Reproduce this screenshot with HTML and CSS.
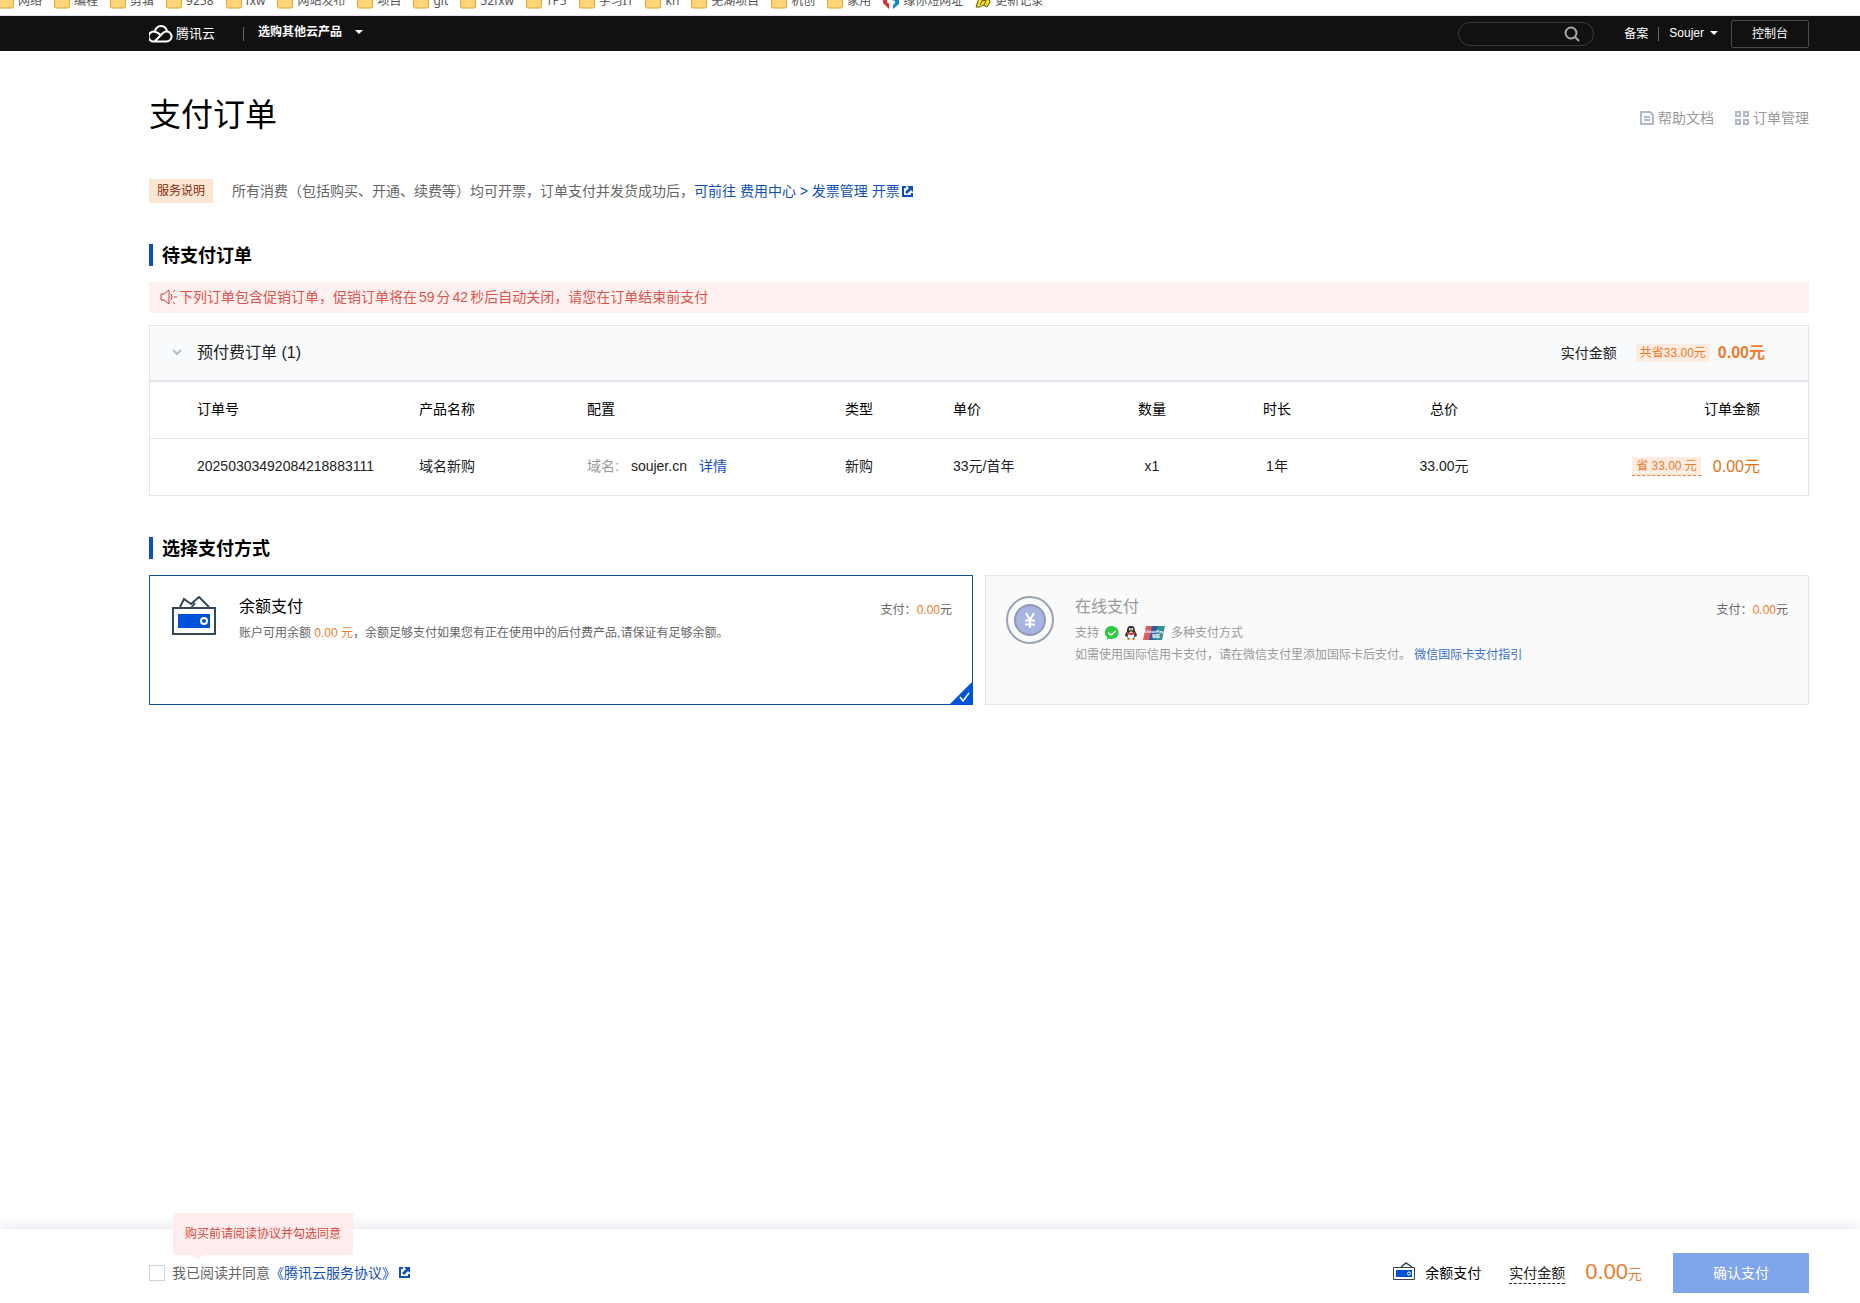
FILE: index.html
```html
<!DOCTYPE html>
<html lang="zh-CN">
<head>
<meta charset="utf-8">
<title>支付订单</title>
<link rel="stylesheet" href="styles.css">
</head>
<body>
<svg class="defs" width="0" height="0" aria-hidden="true">
  <symbol id="folder" viewBox="0 0 16 16"><path d="M.5 1.500h6l1 2h8v10a1.500 1.500 0 0 1-1.500 1.500h-12a1.500 1.500 0 0 1-1.500-1.500z" fill="#ffd57a" stroke="#e2a32e"/></symbol>
  <symbol id="external" viewBox="0 0 11 11"><path d="M0 0h4v2H2v7h7V7h2v4H0zM5 0h6v6L9 4 5 8 3 6l4-4z" fill="currentColor"/></symbol>
  <symbol id="wallet" viewBox="0 0 44 40"><path d="M8 11l4-8 7 5 8-7 10 10M19 12l4-5" fill="none" stroke="#33475b" stroke-width="2"/><path d="M1 12h42v26H1z" fill="#fff" stroke="#33475b" stroke-width="2"/><path d="M6 18h32v14H6z" fill="#0052d9"/><circle cx="32" cy="25" r="3" fill="none" stroke="#fff" stroke-width="2"/></symbol>
  <symbol id="wallet-small" viewBox="0 0 22 18"><path d="M8 5l5-4 6 4" fill="none" stroke="#33475b" stroke-width="1.500"/><path d="M.5 5.500h21v12H.5z" fill="#fff" stroke="#33475b"/><path d="M3 8h16v7H3z" fill="#0052d9"/><circle cx="16" cy="11.500" r="1.500" fill="none" stroke="#fff"/></symbol>
</svg>

<nav class="bookmarks" aria-label="书签">
  <a href="#"><svg><use href="#folder"/></svg>网络</a>
  <a href="#"><svg><use href="#folder"/></svg>编程</a>
  <a href="#"><svg><use href="#folder"/></svg>剪辑</a>
  <a href="#"><svg><use href="#folder"/></svg>9258</a>
  <a href="#"><svg><use href="#folder"/></svg>fxw</a>
  <a href="#"><svg><use href="#folder"/></svg>网站发布</a>
  <a href="#"><svg><use href="#folder"/></svg>项目</a>
  <a href="#"><svg><use href="#folder"/></svg>git</a>
  <a href="#"><svg><use href="#folder"/></svg>52fxw</a>
  <a href="#"><svg><use href="#folder"/></svg>TP5</a>
  <a href="#"><svg><use href="#folder"/></svg>学习IT</a>
  <a href="#"><svg><use href="#folder"/></svg>kh</a>
  <a href="#"><svg><use href="#folder"/></svg>芜湖项目</a>
  <a href="#"><svg><use href="#folder"/></svg>机创</a>
  <a href="#"><svg><use href="#folder"/></svg>家用</a>
  <a href="#"><svg viewBox="0 0 16 16"><path d="M0 5v5l6 6v-5l-2-2V5z" fill="#d8342c"/><path d="M9 7l3 1v2l-2 2v4l6-5V6z" fill="#1488c8"/></svg>缘你短网址</a>
  <a href="#"><svg viewBox="0 0 16 16"><path d="M1 14 4 5l4 3 6-2 1 3-3 5-4-2-3 2z" fill="#f5e21c" stroke="#5c5410"/><path d="M5 12l2-4M9 12l2-4" stroke="#5c5410"/></svg>更新记录</a>
</nav>

<header class="topbar">
  <a class="logo" href="#">
    <svg width="24" height="18" viewBox="0 0 24 18"><path d="M6 16.500h11.500a5 5 0 1 0-3.500-8.500L5.500 16.500a5 5 0 1 1 1-9.500c2 .2 3.500 1.500 5 3M6 7a6 6 0 0 1 12 0" fill="none" stroke="#fff" stroke-width="2"/></svg>
    <span>腾讯云</span>
  </a>
  <i class="divider"></i>
  <button class="menu" type="button">选购其他云产品<i class="caret"></i></button>
  <label class="search">
    <input type="search" aria-label="搜索">
    <svg width="16" height="16" viewBox="0 0 16 16"><circle cx="7" cy="7" r="5.500" fill="none" stroke="#a9a9a9" stroke-width="2"/><path d="M11 11l4 4" stroke="#a9a9a9" stroke-width="2"/></svg>
  </label>
  <a class="record" href="#">备案</a>
  <i class="divider"></i>
  <button class="user" type="button">Soujer<i class="caret"></i></button>
  <button class="console" type="button">控制台</button>
</header>

<main>
  <div class="page-head">
    <h1>支付订单</h1>
    <div class="page-links">
      <a href="#"><svg width="14" height="14" viewBox="0 0 14 14"><path d="M1 1h9l3 3v9H1zM4 6h6M4 9h6" fill="none" stroke="#b0bac8" stroke-width="2"/></svg>帮助文档</a>
      <a href="#"><svg width="14" height="14" viewBox="0 0 14 14"><path d="M1 1h4v4H1zM9 1h4v4H9zM1 9h4v4H1zM9 9h4v4H9z" fill="none" stroke="#b0bac8" stroke-width="2"/></svg>订单管理</a>
    </div>
  </div>

  <p class="notice"><span class="notice-tag">服务说明</span><span>所有消费（包括购买、开通、续费等）均可开票，订单支付并发货成功后，<a href="#">可前往 费用中心 &gt; 发票管理 开票<svg class="ext"><use href="#external"/></svg></a></span></p>

  <h2>待支付订单</h2>
  <p class="alert"><svg width="17" height="16" viewBox="0 0 17 16"><path d="M1 5h3l5-4v14l-5-4H1zM11 5q2 3 0 6M13 3l2-2M13 13l2 2M14 8h3" fill="none" stroke="#c9403c"/></svg><span>下列订单包含促销订单，促销订单将在<span class="count">59</span>分<span class="count">42</span>秒后自动关闭，请您在订单结束前支付</span></p>

  <section class="orders">
    <div class="orders-head">
      <button class="fold" type="button"><svg width="10" height="8" viewBox="0 0 10 8"><path d="M1 1l4 4 4-4" fill="none" stroke="#b3bccb" stroke-width="2"/></svg>预付费订单 (1)</button>
      <span class="orders-label">实付金额</span>
      <span class="save">共省33.00元</span>
      <strong>0.00元</strong>
    </div>
    <table>
      <colgroup><col class="c-id"><col class="c-name"><col class="c-conf"><col class="c-type"><col class="c-price"><col class="c-num"><col class="c-time"><col class="c-total"><col></colgroup>
      <thead>
        <tr><th>订单号</th><th>产品名称</th><th>配置</th><th>类型</th><th>单价</th><th class="mid">数量</th><th class="mid">时长</th><th class="mid">总价</th><th class="end">订单金额</th></tr>
      </thead>
      <tbody>
        <tr><td>20250303492084218883111</td><td>域名新购</td><td><span class="key">域名:</span>soujer.cn<a class="detail" href="#">详情</a></td><td>新购</td><td>33元/首年</td><td class="mid">x1</td><td class="mid">1年</td><td class="mid">33.00元</td><td class="end"><span class="amount"><span class="save dashed">省 33.00 元</span>0.00元</span></td></tr>
      </tbody>
    </table>
  </section>

  <h2>选择支付方式</h2>
  <div class="methods">
    <section class="method selected">
      <svg width="44" height="40"><use href="#wallet"/></svg>
      <div class="method-text">
        <h3>余额支付</h3>
        <p>账户可用余额 <b>0.00 元</b>，余额足够支付如果您有正在使用中的后付费产品,请保证有足够余额。</p>
      </div>
      <span class="pay">支付：<b>0.00</b>元</span>
      <svg class="corner" width="24" height="24" viewBox="0 0 24 24"><path d="M24 0v24H0z" fill="#0052d9"/><path d="M11 16l3 4 6-8" fill="none" stroke="#fff" stroke-width="1.500"/></svg>
    </section>
    <section class="method other">
      <svg width="48" height="48" viewBox="0 0 48 48"><circle cx="24" cy="24" r="23" fill="none" stroke="#99a3b5" stroke-width="2"/><circle cx="24" cy="24" r="15" fill="#a8b4e0" stroke="#8f99b3" stroke-width="2"/><path d="M20 17l4 7 4-7M24 24v8M19 24.500h10M19 28.500h10" fill="none" stroke="#fff" stroke-width="2"/></svg>
      <div class="method-text">
        <h3>在线支付</h3>
        <p class="brands">支持
          <svg width="14" height="14" viewBox="0 0 14 14"><path d="M7 0a7 6.500 0 1 1-3 12.500L2 14l.3-2.500A7 6.500 0 0 1 7 0z" fill="#2fcb3e"/><path d="M3 6.500l3 2.500 5-4" fill="none" stroke="#fff" stroke-width="1.500"/></svg>
          <svg width="12" height="14" viewBox="0 0 12 14"><path d="M6 0c3 0 4 2 4 5l2 4-1 2-1-1-1 3H3l-1-3-1 1-1-2 2-4c0-3 1-5 4-5z" fill="#2b2b33"/><ellipse cx="6" cy="9.500" rx="3.300" ry="3.500" fill="#fff"/><path d="M2 6q4 2 8 0v2q-4 2-8 0z" fill="#dd3c38"/><circle cx="4.800" cy="3" r="1" fill="#fff"/><circle cx="7.200" cy="3" r="1" fill="#fff"/><path d="M3.500 4.500h5L6 6zM2 13h3v1H2zM7 13h3v1H7z" fill="#f0a020"/></svg>
          <svg width="22" height="14" viewBox="0 0 22 14"><path d="M3 0h7L7 14H0z" fill="#dc5a60"/><path d="M9 0h7l-3 14H6z" fill="#33609c"/><path d="M15 0h7l-3 14h-7z" fill="#318f96"/><text x="2" y="7" class="union">UnionPay</text><text x="9" y="12" class="union">银联</text></svg>
          多种支付方式</p>
        <p>如需使用国际信用卡支付，请在微信支付里添加国际卡后支付。 <a href="#">微信国际卡支付指引</a></p>
      </div>
      <span class="pay">支付：<b>0.00</b>元</span>
    </section>
  </div>
</main>

<footer>
  <div class="agree">
    <div class="tip" role="tooltip">购买前请阅读协议并勾选同意</div>
    <input id="agree" type="checkbox">
    <label for="agree">我已阅读并同意</label><a href="#">《腾讯云服务协议》<svg class="ext"><use href="#external"/></svg></a>
  </div>
  <svg class="way-icon" width="22" height="18"><use href="#wallet-small"/></svg>
  <span class="way">余额支付</span>
  <span class="due">实付金额</span>
  <span class="sum">0.00<small>元</small></span>
  <button class="confirm" type="button">确认支付</button>
</footer>
</body>
</html>
```
FILE: styles.css
```css
* { box-sizing: border-box; }
body {
  margin: 0;
  min-height: 100vh;
  display: flex;
  flex-direction: column;
  background: #fff;
  color: #222;
  font: 14px/20px "Liberation Sans", "Noto Sans CJK SC", sans-serif;
}
h1, h2, h3, p { margin: 0; font-weight: 400; }
a { color: #0f4fbb; text-decoration: none; }
button { padding: 0; border: 0; background: none; color: inherit; font: inherit; white-space: nowrap; }
svg { flex: none; }
.defs { position: absolute; }
.ext { width: 11px; height: 11px; }

.bookmarks {
  display: flex;
  align-items: flex-start;
  gap: 12px;
  height: 16px;
  margin-left: -2px;
  overflow: hidden;
  border-bottom: 1px solid #e3e6ea;
}
.bookmarks a {
  display: flex;
  align-items: center;
  gap: 4px;
  margin-top: -8px;
  color: #555;
  font-family: "Noto Sans", "Noto Sans CJK SC", sans-serif;
  font-size: 12px;
  line-height: 18px;
  white-space: nowrap;
}
.bookmarks svg { width: 16px; height: 16px; }

.topbar {
  display: flex;
  align-items: center;
  height: 35px;
  padding: 0 51px 0 149px;
  background: #111;
  color: #fff;
  font-size: 12px;
}
.topbar a { color: #fff; }
.logo { display: flex; align-items: center; gap: 3px; margin-right: 28px; font-size: 13px; }
.divider { width: 1px; height: 14px; background: #666; }
.menu, .user { display: flex; align-items: center; font-weight: 700; }
.menu { gap: 13px; margin-left: 14px; padding-bottom: 3px; }
.user { gap: 6px; margin: 0 13px 0 10px; padding-bottom: 1px; font-weight: 400; }
.caret { border: 4px solid transparent; border-top-color: #fff; border-bottom: 0; }
.search {
  display: flex;
  align-items: center;
  width: 136px;
  height: 24px;
  margin: 0 30px 0 auto;
  padding: 0 13px;
  border: 1px solid #3a3a3a;
  border-radius: 12px;
}
.search input { flex: 1; min-width: 0; padding: 0; border: 0; outline: 0; background: none; color: #fff; }
.record { margin-right: 10px; }
.console { width: 78px; height: 28px; border: 1px solid #4a4a4a; border-radius: 2px; }

main { padding: 40px 51px 0 149px; }
.page-head { display: flex; align-items: center; justify-content: space-between; height: 48px; }
h1 { color: #000; font-size: 32px; line-height: 48px; }
.page-links { display: flex; gap: 21px; padding-top: 6px; }
.page-links a { display: flex; align-items: center; gap: 4px; color: #999; }
.notice { display: flex; align-items: center; gap: 19px; margin-top: 40px; color: #666; }
.notice-tag { padding: 2px 8px; background: #fde5d3; color: #8a2c0e; font-size: 12px; }
.notice .ext { margin-left: 2px; vertical-align: -1px; }

h2 {
  margin-top: 41px;
  padding: 2px 0 0 9px;
  border-left: 4px solid #0f4fbb;
  color: #000;
  font-size: 18px;
  font-weight: 700;
  line-height: 20px;
}
.alert {
  display: flex;
  align-items: center;
  gap: 2px;
  height: 31px;
  margin-top: 16px;
  padding: 0 0 2px 11px;
  background: #fdf1f0;
  color: #dc544f;
}
.count { margin: 0 2px; }

.orders { margin-top: 12px; border: 1px solid #e4e5e7; }
.orders-head {
  display: flex;
  align-items: center;
  height: 56px;
  padding: 0 43px 0 22px;
  border-bottom: 2px solid #e1e5ea;
  background: #f8fafc;
}
.fold { display: flex; align-items: center; gap: 15px; margin-right: auto; font-size: 16px; }
.save { padding: 0 4px; background: #fdecdf; color: #ed7b2f; font-size: 12px; line-height: 18px; }
.orders-head .save { margin: 0 8px 0 19px; }
.orders-head strong { color: #ed7b2f; font-size: 16px; }
table { width: 100%; border-collapse: collapse; table-layout: fixed; }
th, td { height: 57px; padding: 0 0 2px; font-weight: 400; text-align: left; white-space: nowrap; }
th { height: 56px; border-bottom: 1px solid #e4e5e7; color: #000; }
th:first-child, td:first-child { padding-left: 47px; }
th.mid, td.mid { text-align: center; }
th.end, td.end { padding-right: 48px; text-align: right; }
.c-id { width: 269px; }
.c-name { width: 168px; }
.c-conf { width: 258px; }
.c-type { width: 108px; }
.c-price { width: 135px; }
.c-num { width: 128px; }
.c-time { width: 122px; }
.c-total { width: 212px; }
.key { margin-right: 12px; color: #999; }
.detail { margin-left: 12px; }
.amount { display: inline-flex; align-items: center; gap: 12px; color: #e37318; font-size: 16px; }
.dashed { border-bottom: 1px dashed #ed7b2f; }

.methods { display: grid; grid-template-columns: 1fr 1fr; gap: 12px; margin-top: 16px; }
.method {
  position: relative;
  display: flex;
  align-items: flex-start;
  gap: 23px;
  min-height: 130px;
  padding: 20px 20px 20px 22px;
  border: 1px solid #e4e5e7;
  color: #666;
  font-size: 12px;
}
.selected { border-color: #12509e; }
.other { gap: 21px; padding-left: 20px; background: #fafafa; color: #999; }
.method-text { flex: 1; line-height: 22px; }
.method h3 { margin-bottom: 4px; color: #000; font-size: 16px; line-height: 22px; }
.method.other h3 { color: #999; }
.method b { color: #ed7b2f; font-weight: 400; }
.method a { color: #3970cc; }
.brands { display: flex; align-items: center; gap: 6px; }
.union { fill: #fff; font-size: 4px; font-weight: 700; }
.pay { padding-top: 4px; color: #666; white-space: nowrap; }
.corner { position: absolute; right: -1px; bottom: -1px; }

footer {
  display: flex;
  align-items: center;
  height: 74px;
  margin-top: auto;
  padding: 14px 51px 0 149px;
  box-shadow: 0 -4px 12px #e9ecf2;
}
.agree { position: relative; display: flex; align-items: center; margin-right: auto; color: #666; }
.agree input { appearance: none; width: 16px; height: 16px; margin: 0 7px 0 0; border: 1px solid #cfd5de; background: #fff; }
.agree .ext { margin-left: 3px; }
.tip {
  position: absolute;
  left: 24px;
  bottom: 28px;
  padding: 11px 12px;
  background: #ffeded;
  color: #d54941;
  font-size: 12px;
  white-space: nowrap;
}
.tip::after {
  content: "";
  position: absolute;
  left: 20px;
  top: 100%;
  border: 5px solid transparent;
  border-top-color: #ffeded;
  border-bottom: 0;
}
.way-icon { margin-bottom: 4px; }
.way { margin: 0 28px 0 10px; color: #000; }
.due { border-bottom: 1px dashed #222; }
.sum { margin: 0 31px 0 20px; color: #ed7b2f; font-size: 22px; }
.sum small { font-size: 14px; }
.confirm { width: 136px; height: 40px; background: #7fa5ea; color: #fff; }
```
